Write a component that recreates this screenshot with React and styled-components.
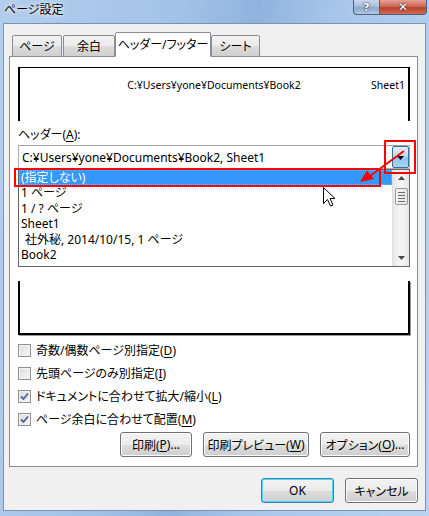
import React from "react";
import styled, { createGlobalStyle } from "styled-components";

const GlobalStyle = createGlobalStyle`
  html, body { margin: 0; padding: 0; background: #fff; }
  body {
    font-family: "Noto Sans", "Noto Sans CJK JP", sans-serif;
    font-size: 12px;
    color: #000;
    font-feature-settings: "palt";
  }
`;

const Window = styled.div`
  position: relative;
  width: 429px;
  height: 516px;
  display: flex;
  flex-direction: column;
  background: linear-gradient(100deg, #b3cdec 0%, #a4c2e8 35%, #8fb3df 50%, #a9c6ea 65%, #b9d2ef 100%);
  overflow: hidden;
`;

const TitleBar = styled.div`
  height: 23px;
  display: flex;
  align-items: flex-start;
`;

const Title = styled.div`
  padding: 2px 0 0 4px;
  font-size: 12px;
  line-height: 16px;
  color: #000;
  text-shadow: 0 0 6px rgba(255, 255, 255, 0.9), 0 0 3px rgba(255, 255, 255, 0.9);
`;

const CaptionButtons = styled.div`
  margin-left: auto;
  margin-right: 2px;
  display: flex;
`;

const CaptionButton = styled.div`
  width: ${(p) => p.$w}px;
  height: 15px;
  box-sizing: border-box;
  border: 1px solid #4a6283;
  border-top: none;
  border-left: ${(p) => (p.$first ? "1px solid #4a6283" : "none")};
  border-radius: ${(p) => (p.$first ? "0 0 0 4px" : "0 0 4px 0")};
  background: ${(p) =>
    p.$close
      ? "linear-gradient(#e4a093 0%, #cf6a5a 45%, #b8402c 55%, #d46d52 100%)"
      : "linear-gradient(#c9d8ec 0%, #a9bedb 45%, #8ea7c9 55%, #b3c9e3 100%)"};
  display: flex;
  align-items: center;
  justify-content: center;
  color: #fff;
  font-family: "DejaVu Sans", sans-serif;
  font-weight: bold;
  font-size: ${(p) => (p.$close ? 12 : 11)}px;
  line-height: 1;
  text-shadow: 0 0 2px #334, 0 0 1px #223;
`;

const Client = styled.div`
  flex: 1;
  margin: 0 3px 5px 3px;
  background: #f0f0f0;
  border: 1px solid #7a93b5;
  box-sizing: border-box;
  display: flex;
  flex-direction: column;
  padding: 9px 7px 0 5px;
`;

const TabStrip = styled.div`
  display: flex;
  align-items: flex-end;
  height: 24px;
  padding-left: 3px;
  position: relative;
  z-index: 1;
  margin-bottom: -1px;
`;

const Tab = styled.div`
  width: ${(p) => p.$w}px;
  height: ${(p) => (p.$active ? 25 : 22)}px;
  box-sizing: border-box;
  border: 1px solid #898c95;
  border-bottom: ${(p) => (p.$active ? "1px solid #fff" : "1px solid #898c95")};
  margin-right: ${(p) => (p.$active ? 0 : 1)}px;
  margin-left: ${(p) => (p.$active ? -1 : 0)}px;
  background: ${(p) => (p.$active ? "#fff" : "linear-gradient(#f2f2f2 0%, #ebebeb 50%, #dddddd 51%, #cfcfcf 100%)")};
  display: flex;
  align-items: center;
  justify-content: center;
  padding-bottom: ${(p) => (p.$active ? 2 : 0)}px;
  font-size: 12px;
  border-radius: 2px 2px 0 0;
`;

const Panel = styled.div`
  height: 411px;
  box-sizing: border-box;
  background: #fff;
  border: 1px solid #898c95;
  padding: 10px 7px 0 8px;
  display: flex;
  flex-direction: column;
`;

const Preview = styled.div`
  height: ${(p) => p.$h}px;
  box-sizing: border-box;
  border-left: 2px solid #000;
  border-right: 2px solid #000;
  border-top: ${(p) => (p.$top ? "1px solid #000" : "none")};
  border-bottom: ${(p) => (p.$bottom ? "2px solid #000" : "none")};
  box-shadow: ${(p) => (p.$bottom ? "1px 1px 0 #9a9a9a" : "none")};
  margin-top: ${(p) => p.$mt || 0}px;
  display: grid;
  grid-template-columns: 1fr auto 1fr;
  align-items: start;
  padding: 10px 3px 0 3px;
  font-size: 10.5px;
  line-height: 14px;
`;

const PreviewRight = styled.div`
  justify-self: end;
`;

const FieldLabel = styled.div`
  margin-top: ${(p) => p.$mt}px;
  height: 16px;
  line-height: 16px;
  font-size: 12px;
`;

/* footer label + combo sit under the open list; only their room is kept */
const HiddenFields = styled.div`
  height: 63px;
`;

const U = styled.span`
  text-decoration: underline;
  text-underline-offset: 2px;
`;

const ComboWrap = styled.div`
  position: relative;
  margin-top: 2px;
  z-index: 5;
`;

const Combo = styled.div`
  height: 24px;
  box-sizing: border-box;
  border: 1px solid #abadb3;
  border-top-color: #a0a0a0;
  display: flex;
  align-items: center;
  padding-left: 3px;
  font-size: 12px;
  background: #fff;
`;

const DropButton = styled.div`
  margin-left: auto;
  width: 17px;
  height: 22px;
  box-sizing: border-box;
  border: 1px solid #3c6f97;
  border-radius: 2px;
  background: linear-gradient(#e0eef8 0%, #c3dcef 45%, #8cc5ea 55%, #a9d6f2 100%);
  display: flex;
  align-items: center;
  justify-content: center;
  padding-top: 2px;
`;

const DropList = styled.div`
  position: absolute;
  left: 0;
  right: 0;
  top: 24px;
  height: 98px;
  box-sizing: border-box;
  border: 1px solid #646464;
  background: #fff;
  display: flex;
`;

const Items = styled.div`
  flex: 1;
`;

const Item = styled.div`
  height: 15.4px;
  line-height: 15.4px;
  padding-left: ${(p) => (p.$indent ? 6 : 2)}px;
  font-size: 12px;
  white-space: pre;
  background: ${(p) => (p.$selected ? "#3399ff" : "transparent")};
  color: ${(p) => (p.$selected ? "#fff" : "#000")};
  outline: ${(p) => (p.$selected ? "1px dotted #e8a040" : "none")};
  outline-offset: -1px;
`;

const ScrollBar = styled.div`
  width: 16px;
  background: linear-gradient(90deg, #e6e6e6, #f4f4f4 40%, #f4f4f4 60%, #e6e6e6);
  border-left: 1px solid #e0e0e0;
  display: flex;
  flex-direction: column;
  align-items: center;
`;

const ScrollArrow = styled.div`
  height: 16px;
  display: flex;
  align-items: center;
  justify-content: center;
`;

const ScrollTrack = styled.div`
  flex: 1;
`;

const Thumb = styled.div`
  width: 13px;
  height: 17px;
  box-sizing: border-box;
  border: 1px solid #9a9a9a;
  border-radius: 2px;
  background: linear-gradient(90deg, #f4f4f4, #e4e4e4);
  display: flex;
  flex-direction: column;
  justify-content: center;
  align-items: center;
  gap: 2px;
  margin-top: 2px;
  > span {
    width: 7px;
    height: 1px;
    background: #6e6e6e;
  }
`;

const Checks = styled.div`
  display: flex;
  flex-direction: column;
  gap: 7px;
  margin-top: 7px;
`;

const CheckRow = styled.div`
  height: 16px;
  display: flex;
  align-items: center;
  gap: 5px;
  font-size: 12px;
`;

const Box = styled.div`
  width: 13px;
  height: 13px;
  box-sizing: border-box;
  border: 1px solid #8f8f8f;
  background: linear-gradient(135deg, #dcdcdc, #f6f6f6);
  box-shadow: inset 0 0 0 1px #f4f4f4;
  display: flex;
  align-items: center;
  justify-content: center;
`;

const ButtonRow = styled.div`
  display: flex;
  justify-content: flex-end;
  gap: 11px;
  margin-top: ${(p) => p.$mt || 0}px;
`;

const Button = styled.div`
  width: ${(p) => p.$w}px;
  height: 25px;
  box-sizing: border-box;
  border: 1px solid ${(p) => (p.$default ? "#3c7fb1" : "#707070")};
  border-radius: 3px;
  background: linear-gradient(#f2f2f2 0%, #ebebeb 50%, #dddddd 51%, #cfcfcf 100%);
  box-shadow: inset 0 0 0 1px ${(p) => (p.$default ? "#48d8fb" : "#fcfcfc")};
  display: flex;
  align-items: center;
  justify-content: center;
  font-size: 12px;
`;

const DialogButtons = styled(ButtonRow)`
  margin-top: 11px;
`;

const Overlay = styled.svg`
  position: absolute;
  left: 0;
  top: 0;
  pointer-events: none;
  z-index: 10;
`;

const items = [
  { text: "(指定しない)", selected: true },
  { text: "1 ページ" },
  { text: "1 / ? ページ" },
  { text: "Sheet1" },
  { text: "社外秘, 2014/10/15, 1 ページ", indent: true },
  { text: "Book2" },
];

const checks = [
  { label: "奇数/偶数ページ別指定", key: "D", checked: false },
  { label: "先頭ページのみ別指定", key: "I", checked: false },
  { label: "ドキュメントに合わせて拡大/縮小", key: "L", checked: true },
  { label: "ページ余白に合わせて配置", key: "M", checked: true },
];

const tabs = [
  { label: "ページ", w: 50 },
  { label: "余白", w: 52 },
  { label: "ヘッダー/フッター", w: 96, active: true },
  { label: "シート", w: 49 },
];

const CheckMark = () => (
  <svg width="9" height="9" viewBox="0 0 9 9">
    <path d="M1 4.5 L3.5 7 L8 1.5" fill="none" stroke="#4d5f94" strokeWidth="1.8" />
  </svg>
);

const Arrow = ({ up }) => (
  <svg width="7" height="4" viewBox="0 0 7 4">
    <path d={up ? "M0 4 H7 L3.5 0 Z" : "M0 0 H7 L3.5 4 Z"} fill="#4a4a4a" />
  </svg>
);

const App = () => (
  <>
    <GlobalStyle />
    <Window>
      <TitleBar>
        <Title>ページ設定</Title>
        <CaptionButtons>
          <CaptionButton $w={27} $first>?</CaptionButton>
          <CaptionButton $w={47} $close>✕</CaptionButton>
        </CaptionButtons>
      </TitleBar>
      <Client>
        <TabStrip>
          {tabs.map((t) => (
            <Tab key={t.label} $w={t.w} $active={t.active}>
              {t.label}
            </Tab>
          ))}
        </TabStrip>
        <Panel>
          <Preview $h={54} $top>
            <span />
            <span>C:¥Users¥yone¥Documents¥Book2</span>
            <PreviewRight>Sheet1</PreviewRight>
          </Preview>
          <FieldLabel $mt={6}>
            ヘッダー(<U>A</U>):
          </FieldLabel>
          <ComboWrap>
            <Combo>
              C:¥Users¥yone¥Documents¥Book2, Sheet1
              <DropButton>
                <svg width="7" height="4" viewBox="0 0 7 4">
                  <path d="M0 0 H7 L3.5 4 Z" fill="#000" />
                </svg>
              </DropButton>
            </Combo>
            <DropList>
              <Items>
                {items.map((it) => (
                  <Item key={it.text} $selected={it.selected} $indent={it.indent}>
                    {it.text}
                  </Item>
                ))}
              </Items>
              <ScrollBar>
                <ScrollArrow>
                  <Arrow up />
                </ScrollArrow>
                <Thumb>
                  <span />
                  <span />
                  <span />
                  <span />
                </Thumb>
                <ScrollTrack />
                <ScrollArrow>
                  <Arrow />
                </ScrollArrow>
              </ScrollBar>
            </DropList>
          </ComboWrap>
          <HiddenFields />
          <Preview $h={54} $bottom $mt={49} />
          <Checks>
            {checks.map((c) => (
              <CheckRow key={c.key}>
                <Box>{c.checked && <CheckMark />}</Box>
                <span>
                  {c.label}(<U>{c.key}</U>)
                </span>
              </CheckRow>
            ))}
          </Checks>
          <ButtonRow $mt={5}>
            <Button $w={72}>
              印刷(<U>P</U>)...
            </Button>
            <Button $w={106}>
              印刷プレビュー(<U>W</U>)
            </Button>
            <Button $w={90}>
              オプション(<U>O</U>)...
            </Button>
          </ButtonRow>
        </Panel>
        <DialogButtons>
          <Button $w={73} $default>
            OK
          </Button>
          <Button $w={73}>キャンセル</Button>
        </DialogButtons>
      </Client>
      <Overlay width="429" height="516" viewBox="0 0 429 516">
        <rect x="385" y="141" width="30" height="32" fill="none" stroke="#ff0000" strokeWidth="2" />
        <rect x="15" y="169" width="365" height="17" fill="none" stroke="#ff0000" strokeWidth="2" />
        <line x1="404" y1="151" x2="370" y2="176" stroke="#ff0000" strokeWidth="2" />
        <path d="M360 182 L367 170.5 L374 179 Z" fill="#ff0000" />
        <path
          d="M323.5 187.5 V203.5 L327.5 199.5 L330.5 206 L333 205 L330 198.5 L335 198.5 Z"
          fill="#fff"
          stroke="#000"
          strokeWidth="1"
        />
      </Overlay>
    </Window>
  </>
);

export default App;
